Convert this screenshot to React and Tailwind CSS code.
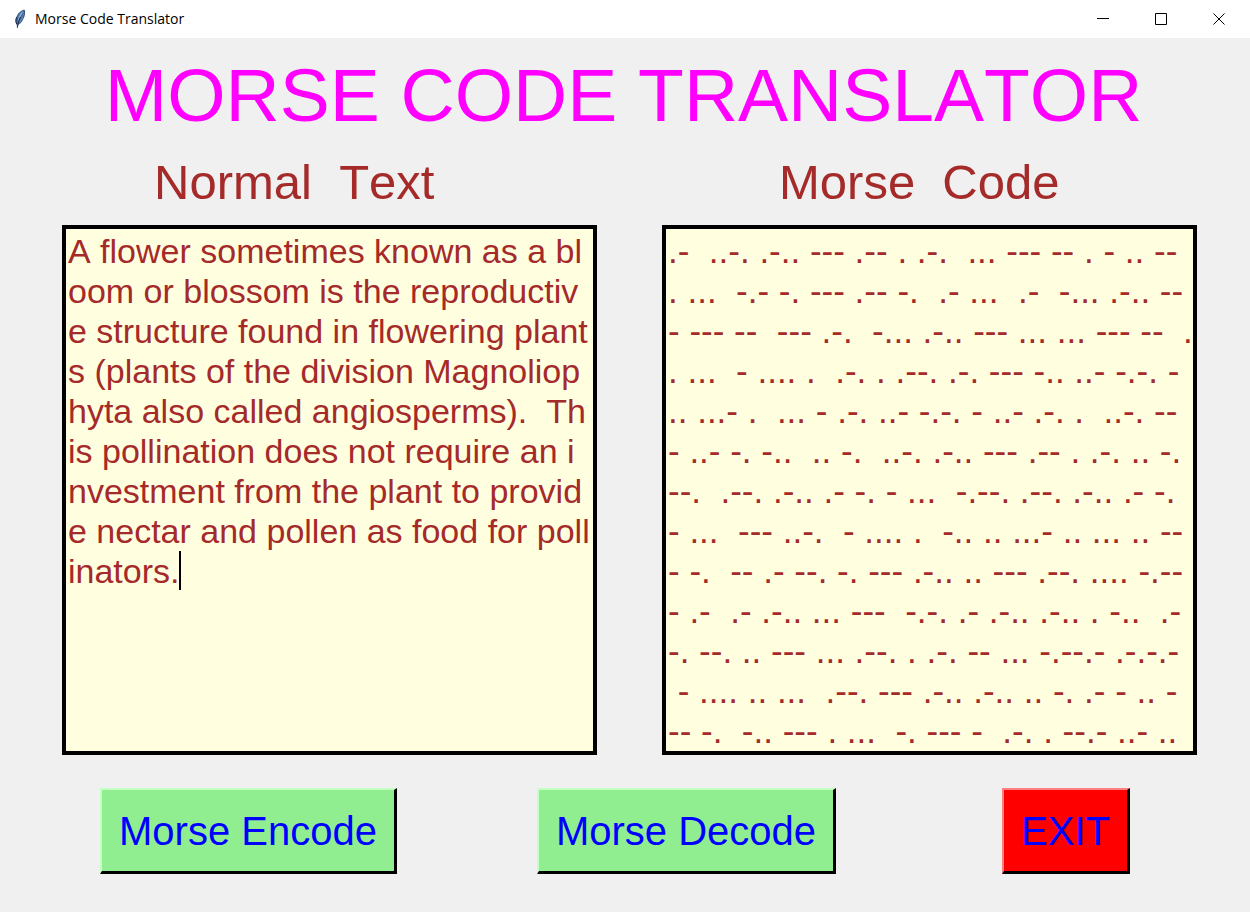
const normalLines = [
  "A flower sometimes known as a bl",
  "oom or blossom is the reproductiv",
  "e structure found in flowering plant",
  "s (plants of the division Magnoliop",
  "hyta also called angiosperms).  Th",
  "is pollination does not require an i",
  "nvestment from the plant to provid",
  "e nectar and pollen as food for poll",
  "inators.",
];

const morseLines = [
  ".-  ..-. .-.. --- .-- . .-.  ... --- -- . - .. --",
  ". ...  -.- -. --- .-- -.  .- ...  .-  -... .-.. --",
  "- --- --  --- .-.  -... .-.. --- ... ... --- --  .",
  ". ...  - .... .  .-. . .--. .-. --- -.. ..- -.-. -",
  ".. ...- .  ... - .-. ..- -.-. - ..- .-. .  ..-. --",
  "- ..- -. -..  .. -.  ..-. .-.. --- .-- . .-. .. -.",
  "--.  .--. .-.. .- -. - ...  -.--. .--. .-.. .- -.",
  "- ...  --- ..-.  - .... .  -.. .. ...- .. ... .. --",
  "- -.  -- .- --. -. --- .-.. .. --- .--. .... -.--",
  "- .-  .- .-.. ... ---  -.-. .- .-.. .-.. . -..  .-",
  "-. --. .. --- ... .--. . .-. -- ... -.--.- .-.-.-",
  " - .... .. ...  .--. --- .-.. .-.. .. -. .- - .. -",
  "-- -.  -.. --- . ...  -. --- -  .-. . --.- ..- ..",
];

function FeatherIcon() {
  return (
    <svg width="12" height="20" viewBox="0 0 12 20" aria-hidden="true">
      <path d="M10.2 0.6C7.4 1.2 4.4 3.6 2.8 7C1.4 10 1.2 13 2.6 15.6L3.2 19.2L4.4 15.8C7.4 14.6 9.2 11.4 10.2 7.6C10.9 5 11.1 2.2 10.2 0.6Z" fill="#3f6496" />
      <path d="M9.6 1.6C7 3.2 5 6.2 4.2 9.4L3.4 13.4C5.6 9.6 7.6 5.6 9.6 1.6Z" fill="#8fb0da" />
      <path d="M9.9 3.4C9.4 7 7.6 10.8 4.6 14.2" fill="none" stroke="#6087bb" strokeWidth="1.4" />
      <path d="M6.6 8C5 11.4 4 14 3.3 18.8" fill="none" stroke="#1b2430" strokeWidth="0.9" />
      <path d="M2.6 8C1.6 10.6 1.6 13.4 2.8 15.2" fill="none" stroke="#1d2c42" strokeWidth="1" />
      <path d="M10.2 1C10.8 3.4 10.4 6 9.6 8.6" fill="none" stroke="#263c5c" strokeWidth="0.8" />
    </svg>
  );
}

function WindowButton({ label, children }) {
  return (
    <button type="button" aria-label={label} className="flex h-full w-[58px] items-center justify-center">
      <svg width="12" height="12" viewBox="0 0 12 12" fill="none" stroke="#000" aria-hidden="true">
        {children}
      </svg>
    </button>
  );
}

function TextPanel({ id, label, lines, labelClass, textClass, caret }) {
  return (
    <div className="flex min-w-0 flex-col">
      <label htmlFor={id} className={"whitespace-pre text-[49px] leading-[56px] text-[#a52a2a] " + labelClass}>
        {label}
      </label>
      <div className="relative mt-[15px]">
        <textarea
          id={id}
          rows={13}
          wrap="off"
          spellCheck={false}
          defaultValue={lines.join("\n")}
          className={"block w-full resize-none overflow-hidden whitespace-pre rounded-none border-4 border-black bg-[#ffffe0] pt-[2px] pl-[2px] leading-[40px] text-[#a52a2a] outline-none " + textClass}
        />
        {caret && <span className="absolute top-[326px] left-[117px] h-[39px] w-[2px] bg-black" />}
      </div>
    </div>
  );
}

function ActionButton({ className, children }) {
  return (
    <button
      type="button"
      className={"border-t-2 border-r-[3px] border-b-[3px] border-l-2 border-r-black border-b-black px-[17px] pt-[17px] pb-[16px] text-[40px] leading-[48px] whitespace-nowrap text-[#0000ff] " + className}
    >
      {children}
    </button>
  );
}

export default function App() {
  return (
    <div className="min-h-screen bg-[#f0f0f0] font-['Liberation_Sans',Arial,sans-serif] [font-kerning:none]">
      <header className="flex h-[38px] items-center bg-white pr-[2px] pl-[14px]">
        <FeatherIcon />
        <span className="ml-[9px] grow font-['Open_Sans',sans-serif] text-[14px] leading-[20px] text-black">Morse Code Translator</span>
        <WindowButton label="Minimize"><path d="M0 5.5H12" /></WindowButton>
        <WindowButton label="Maximize"><path d="M0.5 0.5H11.5V11.5H0.5Z" /></WindowButton>
        <WindowButton label="Close"><path d="M0.5 0.5L11.5 11.5M11.5 0.5L0.5 11.5" /></WindowButton>
      </header>
      <main className="pt-[13px] pr-[53px] pb-[38px] pl-[62px]">
        <h1 className="pr-[12px] text-center text-[75px] leading-[88px] whitespace-nowrap text-[#ff00ff]">MORSE CODE TRANSLATOR</h1>
        <div className="mt-[15px] grid grid-cols-2 gap-[65px]">
          <TextPanel id="normal" label="Normal  Text" labelClass="pl-[92px]" textClass="text-[34px]" lines={normalLines} caret />
          <TextPanel id="morse" label="Morse  Code" labelClass="pl-[117px]" textClass="text-[35px]" lines={morseLines} />
        </div>
        <div className="mt-[33px] flex pr-[67px] pl-[38px]">
          <ActionButton className="border-t-[#c4ffc4] border-l-[#c4ffc4] bg-[#90ee90]">Morse Encode</ActionButton>
          <ActionButton className="ml-[140px] border-t-[#c4ffc4] border-l-[#c4ffc4] bg-[#90ee90]">Morse Decode</ActionButton>
          <ActionButton className="ml-auto border-t-[#ff7f7f] border-l-[#ff7f7f] bg-[#ff0000]">EXIT</ActionButton>
        </div>
      </main>
    </div>
  );
}
